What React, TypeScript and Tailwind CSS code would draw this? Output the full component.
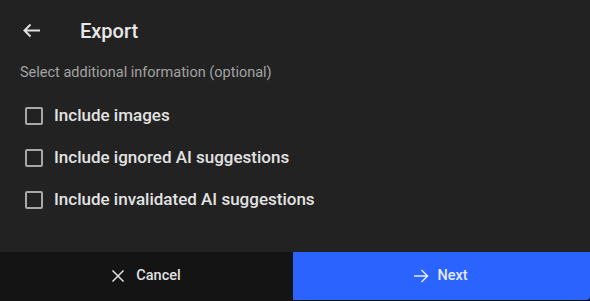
import React from 'react';

const options = [
    'Include images',
    'Include ignored AI suggestions',
    'Include invalidated AI suggestions',
];

const ExportDialog: React.FC = () => {
    return (
        <div className="flex flex-col h-[301px] w-[590px] bg-[#222222] font-['Roboto',sans-serif]">
            {/* Header */}
            <div className="flex items-center gap-9 px-5 pt-5">
                <svg width="24" height="24" viewBox="0 0 24 24" fill="none" stroke="#e0e0e0" strokeWidth="2">
                    <path d="M4.5 10.5H20M10.5 4.5L4.5 10.5L10.5 16.5" />
                </svg>
                <h1 className="text-[20px] leading-6 font-medium text-[#e8e8e8] mt-[-2px]">Export</h1>
            </div>

            <p className="px-5 mt-[21px] text-[14.5px] leading-4 text-[#a3a3a3]">
                Select additional information (optional)
            </p>

            {/* Options */}
            <div className="flex flex-col mt-[14px] px-[22px]">
                {options.map((label) => (
                    <label key={label} className="flex items-center gap-2 h-[42px] cursor-pointer">
                        <svg width="24" height="24" viewBox="0 0 24 24" fill="none">
                            <rect x="4" y="4" width="16" height="16" rx="1" stroke="#a8a8a8" strokeWidth="2" />
                        </svg>
                        <span className="text-[17px] font-medium text-[#e2e2e2]">{label}</span>
                    </label>
                ))}
            </div>

            {/* Footer */}
            <div className="mt-auto flex h-[49px] bg-[#141414]">
                <button className="flex-1 h-[48px] flex items-center justify-center gap-2 pr-1 text-[14.5px] font-medium text-[#e0e0e0]">
                    <svg width="20" height="20" viewBox="0 0 20 20" fill="none" stroke="#e0e0e0" strokeWidth="1.5">
                        <path d="M4.5 4.5L15.5 15.5M15.5 4.5L4.5 15.5" />
                    </svg>
                    Cancel
                </button>
                <button className="w-[297px] h-[48px] bg-[#2b63ff] rounded-br-sm flex items-center justify-center gap-1.5 pr-1 text-[14.5px] font-medium text-[#e4ebff]">
                    <svg width="20" height="20" viewBox="0 0 20 20" fill="none" stroke="#e4ebff" strokeWidth="1.5">
                        <path d="M3 10H16.5M10.5 4L16.5 10L10.5 16" />
                    </svg>
                    Next
                </button>
            </div>
        </div>
    );
};

export default function App() {
    return <ExportDialog />;
}
